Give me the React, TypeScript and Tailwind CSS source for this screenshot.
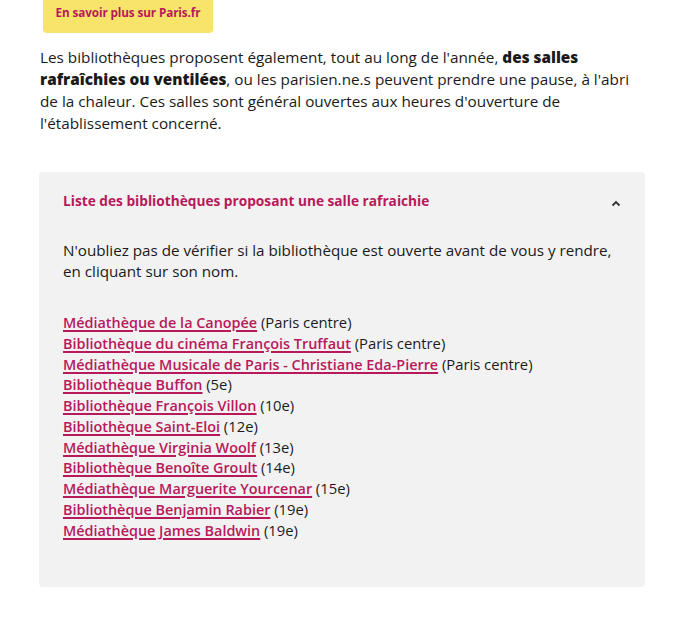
import React from "react";

const libraries: { name: string; area: string }[] = [
  { name: "Médiathèque de la Canopée", area: "(Paris centre)" },
  { name: "Bibliothèque du cinéma François Truffaut", area: "(Paris centre)" },
  { name: "Médiathèque Musicale de Paris - Christiane Eda-Pierre", area: "(Paris centre)" },
  { name: "Bibliothèque Buffon", area: "(5e)" },
  { name: "Bibliothèque François Villon", area: "(10e)" },
  { name: "Bibliothèque Saint-Eloi", area: "(12e)" },
  { name: "Médiathèque Virginia Woolf", area: "(13e)" },
  { name: "Bibliothèque Benoîte Groult", area: "(14e)" },
  { name: "Médiathèque Marguerite Yourcenar", area: "(15e)" },
  { name: "Bibliothèque Benjamin Rabier", area: "(19e)" },
  { name: "Médiathèque James Baldwin", area: "(19e)" },
];

export default function App() {
  return (
    <div
      className="w-[676px] h-[618px] bg-white text-[#1a1a1a] overflow-hidden"
      style={{ fontFamily: '"Open Sans", "Noto Sans", sans-serif' }}
    >
      <div className="pl-[43px]">
        <a
          href="#"
          className="flex h-[33px] w-[170px] items-center justify-center rounded-b-[4px] bg-[#f8e36b] pb-[7px] text-[11.7px] font-bold tracking-[-0.1px] text-[#b8195a] no-underline"
        >
          En savoir plus sur Paris.fr
        </a>
      </div>

      <p className="ml-[40px] mt-[13px] text-[15.3px] leading-[22px]">
        Les bibliothèques proposent également, tout au long de l'année, <strong className="font-extrabold">des salles</strong>
        <br />
        <strong className="font-extrabold">rafraîchies ou ventilées</strong>, ou les parisien.ne.s peuvent prendre une pause, à l'abri
        <br />
        de la chaleur. Ces salles sont général ouvertes aux heures d'ouverture de
        <br />
        l'établissement concerné.
      </p>

      <section className="ml-[39px] mt-[38px] h-[415px] w-[606px] rounded-[4px] bg-[#f2f2f2]">
        <button className="flex w-full items-center justify-between pl-[24px] pr-[24px] pt-[19px] text-left">
          <span className="text-[13.7px] font-bold leading-[20px] text-[#b8195a]">
            Liste des bibliothèques proposant une salle rafraichie
          </span>
          <svg width="10" height="7" viewBox="0 0 10 7" className="mt-[5px]" aria-hidden="true">
            <path d="M1.5 5.5 L5 2 L8.5 5.5" fill="none" stroke="#333" strokeWidth="1.8" />
          </svg>
        </button>

        <p className="ml-[24px] mt-[29px] text-[15.2px] leading-[21px]">
          N'oubliez pas de vérifier si la bibliothèque est ouverte avant de vous y rendre,
          <br />
          en cliquant sur son nom.
        </p>

        <ul className="ml-[24px] mt-[31px] text-[14.4px]">
          {libraries.map((lib) => (
            <li key={lib.name} className="h-[20.75px] leading-[20.75px] whitespace-nowrap">
              <a
                href="#"
                className="font-semibold text-[#b8195a] underline decoration-[#b8195a] decoration-[1.5px] underline-offset-[2px]"
              >
                {lib.name}
              </a>{" "}
              <span className="text-[14.8px] leading-[0px]">{lib.area}</span>
            </li>
          ))}
        </ul>
      </section>
    </div>
  );
}
